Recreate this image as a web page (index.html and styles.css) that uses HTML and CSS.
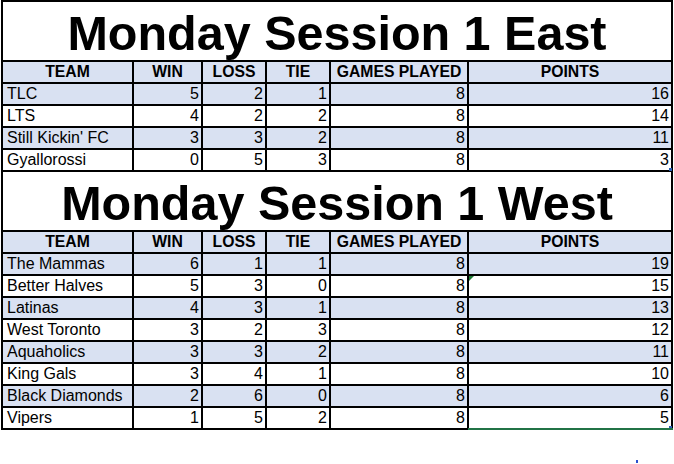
FILE: index.html
```html
<!DOCTYPE html>
<html>
<head>
<meta charset="utf-8">
<link rel="stylesheet" href="styles.css">
</head>
<body>
<main class="sheet">
  <section class="standings">
    <h1 class="title">Monday Session 1 East</h1>
    <div class="row head"><div class="c">TEAM</div><div class="c">WIN</div><div class="c">LOSS</div><div class="c">TIE</div><div class="c">GAMES PLAYED</div><div class="c">POINTS</div></div>
    <div class="row shade"><div class="c name">TLC</div><div class="c">5</div><div class="c">2</div><div class="c">1</div><div class="c">8</div><div class="c">16</div></div>
    <div class="row"><div class="c name">LTS</div><div class="c">4</div><div class="c">2</div><div class="c">2</div><div class="c">8</div><div class="c">14</div></div>
    <div class="row shade"><div class="c name">Still Kickin' FC</div><div class="c">3</div><div class="c">3</div><div class="c">2</div><div class="c">8</div><div class="c">11</div></div>
    <div class="row"><div class="c name">Gyallorossi</div><div class="c">0</div><div class="c">5</div><div class="c">3</div><div class="c">8</div><div class="c handle">3</div></div>
  </section>
  <section class="standings">
    <h1 class="title">Monday Session 1 West</h1>
    <div class="row head"><div class="c">TEAM</div><div class="c">WIN</div><div class="c">LOSS</div><div class="c">TIE</div><div class="c">GAMES PLAYED</div><div class="c">POINTS</div></div>
    <div class="row shade"><div class="c name">The Mammas</div><div class="c">6</div><div class="c">1</div><div class="c">1</div><div class="c">8</div><div class="c">19</div></div>
    <div class="row"><div class="c name">Better Halves</div><div class="c">5</div><div class="c">3</div><div class="c">0</div><div class="c">8</div><div class="c flag">15</div></div>
    <div class="row shade"><div class="c name">Latinas</div><div class="c">4</div><div class="c">3</div><div class="c">1</div><div class="c">8</div><div class="c">13</div></div>
    <div class="row"><div class="c name">West Toronto</div><div class="c">3</div><div class="c">2</div><div class="c">3</div><div class="c">8</div><div class="c">12</div></div>
    <div class="row shade"><div class="c name">Aquaholics</div><div class="c">3</div><div class="c">3</div><div class="c">2</div><div class="c">8</div><div class="c">11</div></div>
    <div class="row"><div class="c name">King Gals</div><div class="c">3</div><div class="c">4</div><div class="c">1</div><div class="c">8</div><div class="c">10</div></div>
    <div class="row shade"><div class="c name">Black Diamonds</div><div class="c">2</div><div class="c">6</div><div class="c">0</div><div class="c">8</div><div class="c">6</div></div>
    <div class="row"><div class="c name">Vipers</div><div class="c">1</div><div class="c">5</div><div class="c">2</div><div class="c">8</div><div class="c selected">5</div></div>
  </section>
  <span class="dot"></span>
</main>
</body>
</html>
```

FILE: styles.css
```css
html, body {
  margin: 0;
  padding: 0;
  background: #ffffff;
}

body {
  font-family: "Liberation Sans", Arial, sans-serif;
  color: #000000;
}

.sheet {
  position: relative;
  width: 674px;
  height: 464px;
  padding-left: 1px;
  box-sizing: border-box;
}

.standings {
  display: grid;
  grid-template-columns: 129px 67px 62px 62px 136px 202px;
  grid-template-rows: 58px;
  grid-auto-rows: 20px;
  gap: 2px;
  padding: 2px;
  width: 672px;
  box-sizing: border-box;
  background: #000000;
}

.standings + .standings {
  padding-top: 0;
}

.title {
  grid-column: 1 / -1;
  height: 58px;
  margin: 0;
  padding-top: 4px;
  box-sizing: border-box;
  background: #ffffff;
  font-size: 48.5px;
  line-height: 54px;
  font-weight: 700;
  text-align: center;
  white-space: nowrap;
}

.row {
  display: contents;
}

.c {
  position: relative;
  background: #ffffff;
  font-size: 16px;
  line-height: 20px;
  text-align: right;
  padding: 0 2px 0 4px;
  white-space: nowrap;
}

.row.shade .c,
.row.head .c {
  background: #d9e1f2;
}

.row.head .c {
  font-size: 15.75px;
  font-weight: 700;
  text-align: center;
  padding: 0;
}

.c.name {
  text-align: left;
}

.c.flag::before {
  content: "";
  position: absolute;
  top: 0;
  left: 0;
  border-top: 5px solid #1e7b34;
  border-right: 5px solid transparent;
}

.c.selected::after {
  content: "";
  position: absolute;
  left: -1px;
  right: -2px;
  bottom: -2px;
  height: 2px;
  background: #217346;
}

.c.handle::after,
.c.selected::before {
  content: "";
  position: absolute;
  right: -1px;
  bottom: -1px;
  width: 3px;
  height: 3px;
  background: #2b5fb3;
}

.dot {
  position: absolute;
  left: 636px;
  top: 460px;
  width: 2px;
  height: 3px;
  background: #2b4fd0;
}
```
